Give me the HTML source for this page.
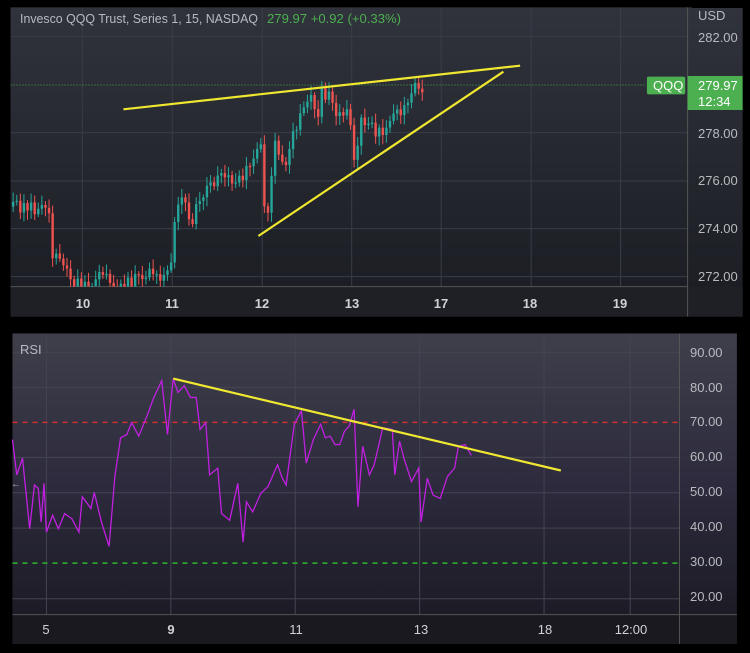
<!DOCTYPE html>
<html><head><meta charset="utf-8"><style>
html,body{margin:0;padding:0;background:#000;width:750px;height:653px;overflow:hidden;font-family:"Liberation Sans",sans-serif}
svg{position:absolute;left:0;top:0}
</style></head><body>
<svg width="750" height="653" viewBox="0 0 750 653">
<defs>
<linearGradient id="g1" x1="0" y1="0" x2="0" y2="1"><stop offset="0" stop-color="#30333c"/><stop offset="1" stop-color="#1a1c22"/></linearGradient>
<linearGradient id="g2" x1="0" y1="0" x2="0" y2="1"><stop offset="0" stop-color="#3f3f4b"/><stop offset="0.5" stop-color="#2c2a3c"/><stop offset="1" stop-color="#191820"/></linearGradient>
</defs>
<g transform="scale(0.4785,0.3333)">
<rect x="22" y="22" width="1530" height="928" fill="url(#g1)"/>
<rect x="22" y="860" width="1530" height="90" fill="#1e2026"/>
<g stroke="#3a3d46" stroke-width="1">
<line x1="172" y1="22" x2="172" y2="860" vector-effect="non-scaling-stroke"/><line x1="360" y1="22" x2="360" y2="860" vector-effect="non-scaling-stroke"/><line x1="548" y1="22" x2="548" y2="860" vector-effect="non-scaling-stroke"/><line x1="735" y1="22" x2="735" y2="860" vector-effect="non-scaling-stroke"/><line x1="922" y1="22" x2="922" y2="860" vector-effect="non-scaling-stroke"/><line x1="1110" y1="22" x2="1110" y2="860" vector-effect="non-scaling-stroke"/><line x1="1297" y1="22" x2="1297" y2="860" vector-effect="non-scaling-stroke"/>
<line x1="22" y1="110" x2="1437" y2="110" vector-effect="non-scaling-stroke"/><line x1="22" y1="398" x2="1437" y2="398" vector-effect="non-scaling-stroke"/><line x1="22" y1="543" x2="1437" y2="543" vector-effect="non-scaling-stroke"/><line x1="22" y1="686" x2="1437" y2="686" vector-effect="non-scaling-stroke"/><line x1="22" y1="830" x2="1437" y2="830" vector-effect="non-scaling-stroke"/>
</g>
<line x1="1437" y1="22" x2="1437" y2="950" stroke="#555" stroke-width="1" vector-effect="non-scaling-stroke"/>
<line x1="22" y1="860" x2="1437" y2="860" stroke="#555" stroke-width="1" vector-effect="non-scaling-stroke"/>
<line x1="22" y1="255" x2="1350" y2="255" stroke="#4caf50" stroke-dasharray="1 2" stroke-width="1" vector-effect="non-scaling-stroke"/>
<g id="candles"></g>
<line x1="258" y1="328" x2="1087" y2="197" stroke="#f0e830" stroke-width="2.2" vector-effect="non-scaling-stroke"/>
<line x1="540" y1="708" x2="1052" y2="215" stroke="#f0e830" stroke-width="2.2" vector-effect="non-scaling-stroke"/>
<rect x="1352" y="230" width="80" height="53" rx="4" fill="#4caf50"/>
<rect x="1437" y="228" width="115" height="102" fill="#4caf50"/>
</g>
<rect x="692" y="0" width="58" height="8" fill="#000"/>
<g font-size="13" fill="#b8bac0">
<text x="20" y="23" textLength="238" lengthAdjust="spacingAndGlyphs">Invesco QQQ Trust, Series 1, 15, NASDAQ</text>
<text x="267" y="23" fill="#4caf50" textLength="134" lengthAdjust="spacingAndGlyphs">279.97  +0.92 (+0.33%)</text>
<text x="698" y="20" fill="#b8bac0">USD</text>
<text x="698" y="42">282.00</text>
<text x="698" y="138">278.00</text>
<text x="698" y="185">276.00</text>
<text x="698" y="233">274.00</text>
<text x="698" y="281">272.00</text>
<text x="653" y="90" fill="#fff">QQQ</text>
<text x="698" y="90" fill="#fff">279.97</text>
<text x="698" y="106" fill="#fff">12:34</text>
<g fill="#d0d2d6" text-anchor="middle" font-weight="bold">
<text x="83" y="308">10</text><text x="172" y="308">11</text><text x="262" y="308">12</text><text x="352" y="308">13</text><text x="441" y="308">17</text><text x="530" y="308">18</text><text x="620" y="308">19</text>
</g>
</g>
<g transform="translate(0,320) scale(0.4785,0.3367)">
<rect x="26" y="40" width="1514" height="922" fill="url(#g2)"/>
<rect x="26" y="875" width="1514" height="87" fill="#1a1920"/>
<g stroke="#444452">
<line x1="97" y1="40" x2="97" y2="875" vector-effect="non-scaling-stroke"/><line x1="357" y1="40" x2="357" y2="875" vector-effect="non-scaling-stroke"/><line x1="617" y1="40" x2="617" y2="875" vector-effect="non-scaling-stroke"/><line x1="877" y1="40" x2="877" y2="875" vector-effect="non-scaling-stroke"/><line x1="1137" y1="40" x2="1137" y2="875" vector-effect="non-scaling-stroke"/><line x1="1317" y1="40" x2="1317" y2="875" vector-effect="non-scaling-stroke"/>
<line x1="26" y1="97" x2="1420" y2="97" vector-effect="non-scaling-stroke"/><line x1="26" y1="200" x2="1420" y2="200" vector-effect="non-scaling-stroke"/><line x1="26" y1="408" x2="1420" y2="408" vector-effect="non-scaling-stroke"/><line x1="26" y1="513" x2="1420" y2="513" vector-effect="non-scaling-stroke"/><line x1="26" y1="618" x2="1420" y2="618" vector-effect="non-scaling-stroke"/><line x1="26" y1="828" x2="1420" y2="828" vector-effect="non-scaling-stroke"/>
</g>
<line x1="1420" y1="40" x2="1420" y2="962" stroke="#555" vector-effect="non-scaling-stroke"/>
<line x1="26" y1="875" x2="1540" y2="875" stroke="#555" vector-effect="non-scaling-stroke"/>
<line x1="26" y1="304" x2="1420" y2="304" stroke="#d03030" stroke-width="1.5" stroke-dasharray="5 5" vector-effect="non-scaling-stroke"/>
<line x1="26" y1="722" x2="1420" y2="722" stroke="#2eb82e" stroke-width="1.5" stroke-dasharray="5 5" vector-effect="non-scaling-stroke"/>
<polyline fill="none" stroke="#c020e0" stroke-width="1.3" vector-effect="non-scaling-stroke" points="26,355 35,460 47,410 62,620 72,490 80,500 86,600 92,485 97,630 110,580 122,620 135,575 150,590 165,630 172,525 190,560 197,512 212,600 228,672 240,465 252,350 265,340 275,305 290,345 300,310 310,275 320,235 338,180 344,260 350,340 362,175 372,215 385,195 398,230 410,230 418,325 430,305 438,460 455,440 463,575 480,595 497,485 508,660 515,540 528,570 545,515 560,495 580,430 590,470 598,490 615,310 630,270 640,425 655,355 670,310 680,350 690,345 700,370 710,370 720,330 730,315 740,265 748,555 758,375 772,460 782,430 800,320 820,325 825,460 835,360 845,415 860,480 875,440 880,600 893,470 905,520 920,530 935,465 950,440 958,375 972,370 985,402"/>
<line x1="362" y1="174" x2="1172" y2="447" stroke="#f0e830" stroke-width="2.2" vector-effect="non-scaling-stroke"/>
</g>
<g font-size="13" fill="#b8bac0">
<text x="20" y="354">RSI</text>
<text x="11" y="487" font-size="10">←</text>
<text x="690" y="357">90.00</text><text x="690" y="392">80.00</text><text x="690" y="426">70.00</text><text x="690" y="461">60.00</text><text x="690" y="496">50.00</text><text x="690" y="531">40.00</text><text x="690" y="566">30.00</text><text x="690" y="601">20.00</text>
<g text-anchor="middle" fill="#d0d2d6"><text x="46" y="634">5</text><text x="171" y="634" font-weight="bold">9</text><text x="296" y="634">11</text><text x="421" y="634">13</text><text x="545" y="634">18</text><text x="631" y="634">12:00</text></g>
</g>
</svg>
<script>
(function(){
var pts=[[22,620],[60,620],[100,640],[105,760],[135,790],[140,855],[185,850],[195,830],[260,855],[300,820],[330,830],[355,780],[362,650],[385,590],[400,690],[410,610],[440,550],[470,530],[500,540],[520,500],[545,430],[550,620],[560,620],[570,430],[590,500],[610,410],[630,310],[650,290],[660,400],[670,270],[690,300],[710,360],[725,330],[740,500],[750,370],[770,350],[785,400],[800,400],[820,340],[845,320],[855,265],[885,258]];
function f(x){for(var i=0;i<pts.length-1;i++){if(x>=pts[i][0]&&x<=pts[i+1][0]){var t=(x-pts[i][0])/(pts[i+1][0]-pts[i][0]);return pts[i][1]+t*(pts[i+1][1]-pts[i][1]);}}return pts[pts.length-1][1];}
var s=7,g=document.getElementById('candles'),h='',prev=f(22);
for(var x=25;x<=885;x+=7.5){var c=f(x)+(Math.sin(x*s)*18);s=(s*1.7)%13+1;var o=prev;var top=Math.min(o,c),bot=Math.max(o,c);if(bot-top<4)bot=top+4;var up=c<o;var col=up?'#26a69a':'#ef5350';
var wt=top-8-Math.abs(Math.cos(x))*20,wb=Math.min(bot+8+Math.abs(Math.sin(x*3))*20,860);
h+='<line x1="'+(x+2.5)+'" x2="'+(x+2.5)+'" y1="'+wt+'" y2="'+wb+'" stroke="'+col+'" stroke-width="1" vector-effect="non-scaling-stroke"/>';
h+='<rect x="'+x+'" y="'+top+'" width="5" height="'+Math.min(bot-top,860-top)+'" fill="'+col+'"/>';prev=c;}
g.innerHTML=h;})();
</script>
</body></html>
